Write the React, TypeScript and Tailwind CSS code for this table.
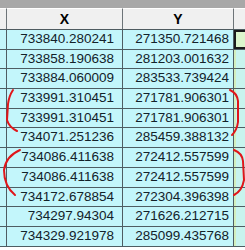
const rows: [string, string][] = [
  ["733840.280241", "271350.721468"],
  ["733858.190638", "281203.001632"],
  ["733884.060009", "283533.739424"],
  ["733991.310451", "271781.906301"],
  ["733991.310451", "271781.906301"],
  ["734071.251236", "285459.388132"],
  ["734086.411638", "272412.557599"],
  ["734086.411638", "272412.557599"],
  ["734172.678854", "272304.396398"],
  ["734297.94304", "271626.212715"],
  ["734329.921978", "285099.435768"],
];

export default function App() {
  return (
    <div className="relative h-[250px] w-[245px] overflow-hidden bg-white font-['Liberation_Sans',Arial,sans-serif]">
      <div className="h-[8px] bg-[#a8a8a8]" />
      <div className="flex h-[22px] border-b border-[#4f5b60] bg-[#f0f0f0] text-[14px] font-bold text-black">
        <div className="w-[7px] shrink-0 border-r border-[#6d7478] border-t border-t-white" />
        <div className="flex w-[116px] shrink-0 items-center justify-center border-r border-[#6d7478] border-t border-t-white">
          X
        </div>
        <div className="flex w-[111px] shrink-0 items-center justify-center border-r border-[#6d7478] border-t border-t-white">
          Y
        </div>
        <div className="flex-1 border-t border-t-white" />
      </div>
      {rows.map(([x, y], i) => (
        <div
          key={i}
          className="flex h-[19.7px] border-b border-[#4e5d63] bg-[#c3f6fb] text-[13.5px] leading-[18.7px] text-[#13222a]"
        >
          <div className="w-[7px] shrink-0 border-r border-[#4e5d63]" />
          <div className="w-[116px] shrink-0 border-r border-[#4e5d63] pr-[8px] text-right">
            {x}
          </div>
          <div className="w-[111px] shrink-0 border-r border-[#4e5d63] pr-[4px] text-right">
            {y}
          </div>
          <div
            className={
              i === 0
                ? "flex-1 border-2 border-r-0 border-[#1b1b1b] bg-[#dcf6cc]"
                : "flex-1 border-l-2 border-[#d3efbf] bg-[#c8f4ee]"
            }
          />
        </div>
      ))}
      <svg
        className="pointer-events-none absolute inset-0"
        width="245"
        height="250"
        viewBox="0 0 245 250"
        fill="none"
        stroke="#e0161a"
        strokeWidth="2"
        strokeLinecap="round"
      >
        <path d="M13 90 Q9 96 8 104 L7 120 Q9 127 17 131" />
        <path d="M20 150 Q6 156 4 170 Q4 186 15 195" />
        <path d="M230 90 Q237 93 238 101 L238 122 Q237 130 232 135" />
        <path d="M234 150 Q242 153 243 161 L244 180 Q242 191 234 195" />
      </svg>
    </div>
  );
}
